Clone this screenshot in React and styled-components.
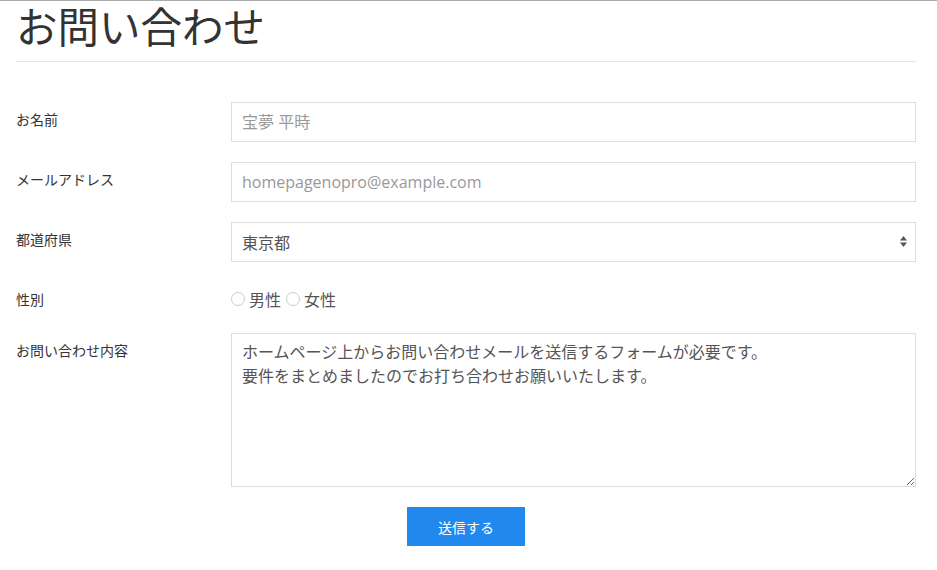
import React from 'react';
import styled, { createGlobalStyle } from 'styled-components';

const GlobalStyle = createGlobalStyle`
    body {
        margin: 0;
        background: #fff;
        color: #333;
        font-family: "Open Sans", "Noto Sans CJK JP", sans-serif;
        border-top: 1px solid #aaa;
    }
`;

const Page = styled.div`
    width: 900px;
    padding: 0 21px 0 16px;
`;

const Title = styled.h1`
    margin: 0;
    padding-bottom: 12px;
    font-size: 41.5px;
    font-weight: normal;
    line-height: 48px;
    color: #333;
    font-family: "Noto Sans CJK JP", sans-serif;
    border-bottom: 1px solid #e5e5e5;
`;

const Form = styled.form`
    display: flex;
    flex-direction: column;
    gap: 20px;
    padding-top: 40px;
`;

const Row = styled.div`
    display: grid;
    grid-template-columns: 215px 1fr;
    align-items: start;
`;

const Label = styled.label`
    padding-top: 7px;
    font-size: 14px;
    line-height: 20px;
    color: #333;
    font-family: "Noto Sans CJK JP", sans-serif;
`;

const Input = styled.input`
    box-sizing: border-box;
    width: 100%;
    height: 40px;
    padding: 0 10px;
    border: 1px solid #ddd;
    border-radius: 0;
    font-size: 16px;
    font-family: "Open Sans", "Noto Sans CJK JP", sans-serif;
    color: #555;
    outline: none;
    &::placeholder {
        color: #999;
    }
`;

const SelectWrap = styled.div`
    position: relative;
`;

const Select = styled.select`
    box-sizing: border-box;
    width: 100%;
    height: 40px;
    padding: 0 10px;
    border: 1px solid #ddd;
    border-radius: 0;
    background: #fff;
    appearance: none;
    font-size: 16px;
    font-family: "Noto Sans CJK JP", sans-serif;
    color: #555;
    outline: none;
`;

const Arrows = styled.svg`
    position: absolute;
    right: 9px;
    top: 14px;
    pointer-events: none;
`;

const Radios = styled.div`
    display: flex;
    align-items: center;
    height: 31px;
    padding-top: 3px;
    box-sizing: border-box;
`;

const RadioLabel = styled.label`
    display: flex;
    align-items: center;
    gap: 4px;
    margin-right: 5px;
    font-size: 16px;
    color: #555;
    font-family: "Noto Sans CJK JP", sans-serif;
`;

const Radio = styled.input`
    appearance: none;
    margin: 0;
    width: 14px;
    height: 14px;
    border: 1px solid #ccc;
    border-radius: 50%;
    background: #fff;
`;

const TextArea = styled.textarea`
    box-sizing: border-box;
    width: 100%;
    height: 154px;
    padding: 5px 10px;
    border: 1px solid #ddd;
    border-radius: 0;
    font-size: 16px;
    line-height: 24px;
    font-family: "Noto Sans CJK JP", sans-serif;
    color: #555;
    outline: none;
    resize: vertical;
`;

const Actions = styled.div`
    display: flex;
    justify-content: center;
`;

const Submit = styled.button`
    width: 118px;
    height: 39px;
    border: none;
    border-radius: 0;
    background: #2189ee;
    color: #fff;
    font-size: 14px;
    font-family: "Noto Sans CJK JP", sans-serif;
`;

export default function App() {
    return (
        <>
            <GlobalStyle />
            <Page>
                <Title>お問い合わせ</Title>
                <Form onSubmit={e => e.preventDefault()}>
                    <Row>
                        <Label>お名前</Label>
                        <Input placeholder="宝夢 平時" />
                    </Row>
                    <Row>
                        <Label>メールアドレス</Label>
                        <Input placeholder="homepagenopro@example.com" />
                    </Row>
                    <Row>
                        <Label>都道府県</Label>
                        <SelectWrap>
                            <Select defaultValue="東京都">
                                <option>北海道</option>
                                <option>東京都</option>
                                <option>大阪府</option>
                            </Select>
                            <Arrows width="7" height="11" viewBox="0 0 7 11">
                                <path d="M3.5 0 L7 4.5 L0 4.5 Z" fill="#555" />
                                <path d="M3.5 11 L7 6.5 L0 6.5 Z" fill="#555" />
                            </Arrows>
                        </SelectWrap>
                    </Row>
                    <Row>
                        <Label>性別</Label>
                        <Radios>
                            <RadioLabel><Radio type="radio" name="sex" />男性</RadioLabel>
                            <RadioLabel><Radio type="radio" name="sex" />女性</RadioLabel>
                        </Radios>
                    </Row>
                    <Row>
                        <Label>お問い合わせ内容</Label>
                        <TextArea defaultValue={"ホームページ上からお問い合わせメールを送信するフォームが必要です。\n要件をまとめましたのでお打ち合わせお願いいたします。"} />
                    </Row>
                    <Actions>
                        <Submit type="submit">送信する</Submit>
                    </Actions>
                </Form>
            </Page>
        </>
    );
}
